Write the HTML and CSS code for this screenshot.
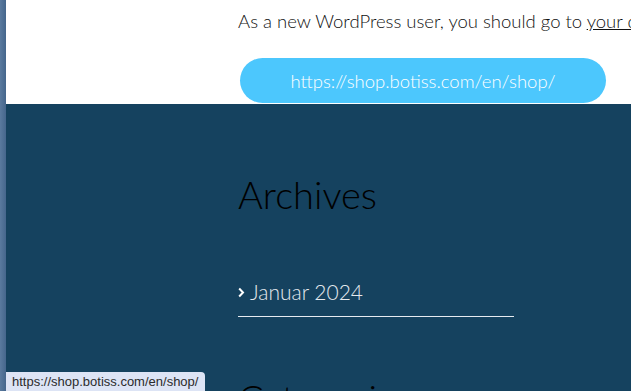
FILE: index.html
```html
<!DOCTYPE html>
<html>
<head>
  <title>botiss shop</title>
  <link rel="stylesheet" href="styles.css">
</head>
<body>
  <div class="desktop-edge"></div>
  <div class="site">
    <div class="entry">
      <p class="entry-text">As a new WordPress user, you should go to <a href="#">your dashboard</a> to delete this page.</p>
      <a class="shop-button" href="https://shop.botiss.com/en/shop/">https://shop.botiss.com/en/shop/</a>
    </div>

    <!-- Footer widgets -->
    <div class="footer">
      <div class="widget">
        <h2 class="widget-title">Archives</h2>
        <ul class="widget-list">
          <li>
            <svg class="chevron" width="7" height="11" viewBox="0 0 7 11">
              <path d="M1.2 1.5 L5 5.5 L1.2 9.5" fill="none" stroke="#ffffff" stroke-width="2"/>
            </svg>
            <a href="#">Januar 2024</a>
          </li>
        </ul>
      </div>
      <div class="widget">
        <h2 class="widget-title">Categories</h2>
      </div>
    </div>
  </div>

  <div class="status-bar">https://shop.botiss.com/en/shop/</div>
</body>
</html>
```

FILE: styles.css
```css
/* Page */
html, body {
  height: 100%;
}
body {
  margin: 0;
  display: flex;
  overflow: hidden;
  font-family: Lato, "Open Sans", sans-serif;
  background-color: #15425f;
}
.desktop-edge {
  width: 6px;
  flex-shrink: 0;
  background: linear-gradient(90deg, #5a7a9e, #45668c);
}
.site {
  flex-grow: 1;
  min-width: 0;
  overflow: hidden;
}

/* Entry content */
.entry {
  background-color: #fff;
  height: 104px;
  padding-left: 232px;
  overflow: hidden;
}
.entry-text {
  margin: 0;
  padding-top: 9px;
  font-size: 18.5px;
  font-weight: 300;
  line-height: 24px;
  color: #111;
  white-space: nowrap;
}
.entry-text a {
  color: #111;
}
.shop-button {
  display: flex;
  align-items: center;
  justify-content: center;
  width: 366px;
  height: 45px;
  margin-top: 25px;
  margin-left: 2px;
  border-radius: 23px;
  background-color: #4cc7fd;
  color: #fff;
  font-size: 18.5px;
  font-weight: 300;
  text-decoration: none;
}

/* Footer widgets */
.footer {
  padding: 67px 0 0 232px;
}
.widget {
  width: 276px;
}
.widget-title {
  margin: 0;
  font-size: 38px;
  font-weight: 300;
  line-height: 46px;
  color: #000;
}
.widget-list {
  list-style: none;
  margin: 63px 0 58px;
  padding: 0;
}
.widget-list li {
  display: flex;
  align-items: center;
  padding-bottom: 12px;
  border-bottom: 1px solid #e6ebf0;
  line-height: 24px;
}
.chevron {
  margin-right: 5px;
  margin-top: 1px;
}
.widget-list a {
  color: #e4e9ee;
  font-size: 21px;
  font-weight: 300;
  text-decoration: none;
}

/* Browser status bar */
.status-bar {
  position: absolute;
  left: 6px;
  bottom: 0;
  height: 19px;
  padding: 0 7px 0 6px;
  background-color: #dde4f5;
  border-top-right-radius: 4px;
  color: #2b2b2b;
  font-family: "Liberation Sans", Arial, sans-serif;
  font-size: 13px;
  line-height: 20px;
}
```
